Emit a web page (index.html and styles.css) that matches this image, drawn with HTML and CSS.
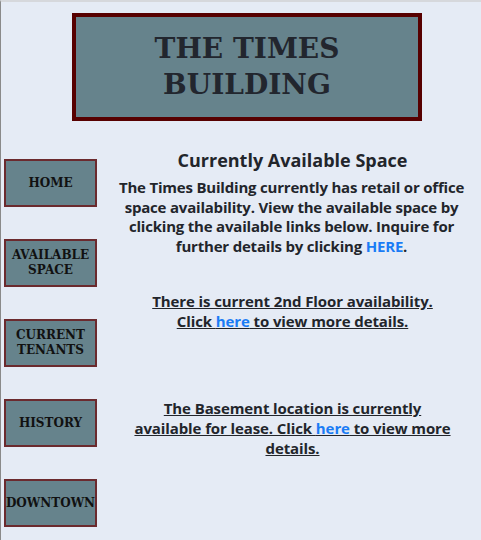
FILE: index.html
```html
<!DOCTYPE html>
<html>
<head>
<meta charset="utf-8">
<link rel="stylesheet" href="styles.css">
</head>
<body>
<div class="page">
  <header class="banner">
    <h1 class="banner-title">THE TIMES<br>BUILDING</h1>
  </header>
  <div class="layout">
    <nav class="nav">
      <a class="nav-btn">HOME</a>
      <a class="nav-btn">AVAILABLE<br>SPACE</a>
      <a class="nav-btn">CURRENT<br>TENANTS</a>
      <a class="nav-btn">HISTORY</a>
      <a class="nav-btn">DOWNTOWN</a>
    </nav>
    <main class="content">
      <h2 class="heading">Currently Available Space</h2>
      <p class="intro">The Times Building currently has retail or office space availability. View the available space by clicking the available links below. Inquire for further details by clicking <a class="link">HERE</a>.</p>
      <p class="listing first"><u>There is current 2nd Floor availability.<br>Click <a class="link">here</a> to view more details.</u></p>
      <p class="listing second"><u>The Basement location is currently available for lease. Click <a class="link">here</a> to view more details.</u></p>
    </main>
  </div>
</div>
</body>
</html>
```
FILE: styles.css
```css
html, body {
  margin: 0;
  padding: 0;
  background: #e5ebf5;
}
.page {
  width: 481px;
  height: 540px;
  box-sizing: border-box;
  border-left: 1px solid #8a8a8a;
  border-top: 2px solid #d6d8dc;
  overflow: hidden;
}
.banner {
  margin: 11px 0 0 71px;
  width: 350px;
  height: 108px;
  box-sizing: border-box;
  border: 4px solid #570000;
  background: #66838c;
  display: flex;
  align-items: center;
  justify-content: center;
}
.banner-title {
  margin: 0;
  font-family: "DejaVu Serif", "Liberation Serif", serif;
  font-weight: bold;
  font-size: 28px;
  line-height: 36px;
  color: #22262e;
  text-align: center;
}
.layout {
  display: flex;
  margin-top: 27px;
}
.nav {
  width: 103px;
  flex: none;
  display: flex;
  flex-direction: column;
  gap: 32px;
  padding-top: 11px;
  padding-left: 3px;
  box-sizing: border-box;
}
.nav-btn {
  width: 93px;
  height: 48px;
  box-sizing: border-box;
  border: 2px solid #6b2a2e;
  background: #66838c;
  display: flex;
  align-items: center;
  justify-content: center;
  text-align: center;
  font-family: "DejaVu Serif", serif;
  font-weight: bold;
  font-size: 12px;
  letter-spacing: 0;
  line-height: 15px;
  color: #111;
  white-space: nowrap;
}
.content {
  flex: 1;
  text-align: center;
  font-family: "Open Sans", "Noto Sans", sans-serif;
  color: #22252b;
}
.heading {
  margin: 0;
  font-size: 18px;
  font-weight: bold;
  line-height: 24px;
}
.intro {
  margin: 6px 8px 0 6px;
  font-size: 15px;
  font-weight: bold;
  letter-spacing: -0.2px;
  line-height: 19.5px;
}
.listing {
  font-size: 15px;
  font-weight: bold;
  letter-spacing: -0.1px;
  line-height: 20px;
}
.listing.first {
  margin: 35px 0 0;
}
.listing.second {
  margin: 67px 28px 0;
}
.link {
  color: #1a7cf5;
}
```
